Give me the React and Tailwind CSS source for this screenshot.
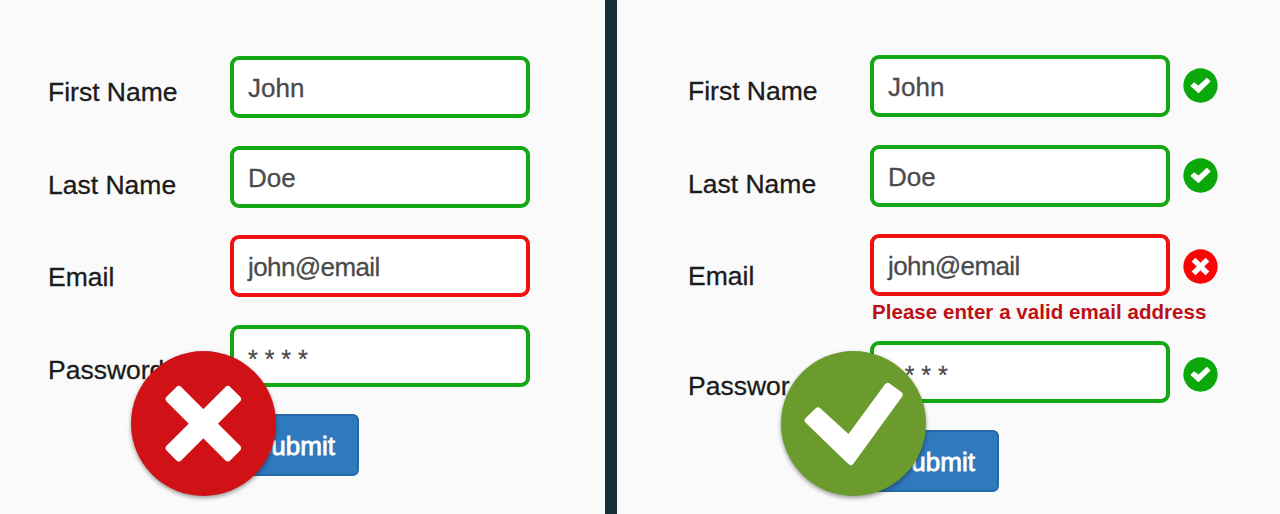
const borders = {
  green: 'border-[#13a813]',
  red: 'border-[#ee1111]',
};

function StatusIcon({ ok }) {
  return (
    <svg className="h-[35px] w-[35px] shrink-0" viewBox="99 68 104 104" aria-hidden="true">
      <circle cx="151" cy="120" r="51" fill={ok ? '#0aa80a' : '#f90505'} />
      {ok ? (
        <path
          d="M123 121 L132 112 L145 122 L170 99 L179 108 L145 141 Z"
          fill="#fff"
          stroke="#fff"
          strokeWidth="3"
          strokeLinejoin="round"
        />
      ) : (
        <path d="M136 105 L166 135 M166 105 L136 135" stroke="#fff" strokeWidth="16" strokeLinecap="square" />
      )}
    </svg>
  );
}

function Field({ label, labelClass, value, valueClass = 'pt-[13px] text-[26px]', color = 'green', status, iconClass = 'mt-[13px]' }) {
  return (
    <div className="flex h-[62px] items-start">
      <label className={`w-[182px] shrink-0 text-[26.5px] leading-[30px] whitespace-nowrap text-[#1b1b1b] [-webkit-text-stroke:0.3px_#1b1b1b] ${labelClass}`}>
        {label}
      </label>
      <div
        className={`h-[62px] w-[300px] shrink-0 rounded-[9px] border-4 bg-white pl-[14px] leading-[30px] whitespace-pre text-[#4b4b4b] [-webkit-text-stroke:0.3px_#4b4b4b] ${borders[color]} ${valueClass}`}
      >
        {value}
      </div>
      {status && (
        <div className={`ml-[13px] ${iconClass}`}>
          <StatusIcon ok={status === 'ok'} />
        </div>
      )}
    </div>
  );
}

function Submit() {
  return (
    <button className="ml-[182px] block h-[62px] w-[129px] rounded-[6px] border-2 border-[#2869a8] bg-[#2f79bd] pt-[1px] text-center text-[26px] leading-[30px] text-white [-webkit-text-stroke:0.8px_white]">
      Submit
    </button>
  );
}

function Cross() {
  return (
    <svg className="h-full w-full" viewBox="62 107 435 435" aria-hidden="true">
      <g fill="#fff" transform="translate(279 325)">
        <rect x="-135" y="-31" width="270" height="62" rx="11" transform="rotate(45)" />
        <rect x="-135" y="-31" width="270" height="62" rx="11" transform="rotate(-45)" />
      </g>
    </svg>
  );
}

function Tick() {
  return (
    <svg className="h-full w-full" viewBox="63 107 435 435" aria-hidden="true">
      <path
        d="M144 315 L174 286 L267 371 L383 213 L418 238 L272 439 Z"
        fill="#fff"
        stroke="#fff"
        strokeWidth="20"
        strokeLinejoin="round"
      />
    </svg>
  );
}

export default function App() {
  return (
    <main className="flex h-[514px] w-[1280px] overflow-hidden bg-[#fafafa] font-['Liberation_Sans',Arial,sans-serif]">
      <section className="relative w-[605px] shrink-0 pt-[56px] pl-[48px]">
        <div className="flex flex-col">
          <Field label="First Name" labelClass="pt-[21px]" value="John" />
          <div className="h-[28px]" />
          <Field label="Last Name" labelClass="pt-[24px]" value="Doe" />
          <div className="h-[27px]" />
          <Field label="Email" labelClass="pt-[27px]" value="john@email" valueClass="pt-[13px] text-[26px] tracking-[-0.6px]" color="red" />
          <div className="h-[28px]" />
          <Field label="Password" labelClass="pt-[30px]" value="* * * *" valueClass="pt-[15px] text-[25px]" />
          <div className="h-[27px]" />
          <Submit />
        </div>
        <div className="absolute top-[351px] left-[131px] h-[145px] w-[145px] rounded-full bg-[#d01217] shadow-[0_2px_4px_rgba(0,0,0,0.4)]">
          <Cross />
        </div>
      </section>
      <div className="w-[12px] shrink-0 bg-[#192c39]" />
      <section className="relative w-[663px] shrink-0 pt-[55px] pl-[71px]">
        <div className="flex flex-col">
          <Field label="First Name" labelClass="pt-[21px]" value="John" status="ok" />
          <div className="h-[28px]" />
          <Field label="Last Name" labelClass="pt-[24px]" value="Doe" status="ok" />
          <div className="h-[27px]" />
          <Field label="Email" labelClass="pt-[27px]" value="john@email" valueClass="pt-[13px] text-[26px] tracking-[-0.6px]" color="red" status="error" iconClass="mt-[15px]" />
          <div className="ml-[184px] h-[45px] pt-[4px] text-[20.5px] leading-[24px] font-bold tracking-[0.05px] whitespace-nowrap text-[#bd1016]">
            Please enter a valid email address
          </div>
          <Field label="Passwor" labelClass="pt-[30px]" value="* * * *" valueClass="pt-[15px] text-[25px]" status="ok" iconClass="mt-[16px]" />
          <div className="h-[27px]" />
          <Submit />
        </div>
        <div className="absolute top-[351px] left-[164px] h-[145px] w-[145px] rounded-full bg-[#6b9a2d] shadow-[0_2px_4px_rgba(0,0,0,0.4)]">
          <Tick />
        </div>
      </section>
    </main>
  );
}
